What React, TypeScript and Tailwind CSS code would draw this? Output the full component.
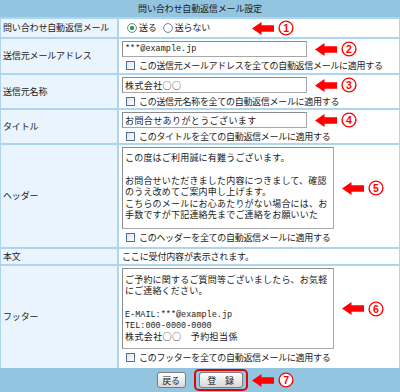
import React from "react";

const jp = "font-['Noto_Sans_CJK_JP',sans-serif]";
const lab = "text-[9px] tracking-[-0.15px] whitespace-nowrap";
const mono = "font-['Liberation_Mono',monospace] text-[8.5px]";

function Arrow() {
  return (
    <svg width="22" height="13" viewBox="0 0 22 13" className="shrink-0">
      <path d="M0 6.5 L9.5 0 L9.5 3.3 L22 3.3 L22 9.7 L9.5 9.7 L9.5 13 Z" fill="#ff0000" />
    </svg>
  );
}

function Num({ n }: { n: string }) {
  return (
    <svg width="16" height="16" viewBox="0 0 16 16" className="shrink-0">
      <circle cx="8" cy="8" r="6.9" fill="#ffffff" stroke="#ff0000" strokeWidth="1.4" />
      <text
        x="8"
        y="11.6"
        textAnchor="middle"
        fontSize="10.5"
        fontWeight="bold"
        fill="#ff0000"
        fontFamily="Liberation Sans, Arial, sans-serif"
      >
        {n}
      </text>
    </svg>
  );
}

function Mark({ n }: { n: string }) {
  return (
    <div className="flex items-center gap-[4px] shrink-0">
      <Arrow />
      <Num n={n} />
    </div>
  );
}

function Checkbox() {
  return <span className="block w-[9px] h-[9px] border border-[#4d6f98] bg-linear-to-br from-[#dfe3e8] to-white shrink-0" />;
}

function CheckRow({ text }: { text: string }) {
  return (
    <div className="flex items-center h-[12px] pl-[4px] gap-[4px] text-[9px] tracking-[-0.3px] whitespace-nowrap">
      <Checkbox />
      <span className="leading-none">{text}</span>
    </div>
  );
}

function Radio({ on }: { on?: boolean }) {
  return (
    <svg width="10" height="10" viewBox="0 0 10 10" className="shrink-0">
      <circle cx="5" cy="5" r="4.4" fill="#ffffff" stroke="#5c7596" strokeWidth="0.9" />
      {on && <circle cx="5" cy="5" r="2.2" fill="#2f9e3c" />}
    </svg>
  );
}

function Label({ children }: { children: React.ReactNode }) {
  return (
    <div className={`w-[116px] shrink-0 bg-[#eaf4fd] flex items-center pl-[2px] ${lab}`}>
      {children}
    </div>
  );
}

function InputRow({ value, n, check }: { value: React.ReactNode; n: string; check: string }) {
  return (
    <div className="flex-1 bg-white flex flex-col pl-[3px] pt-[2px] gap-[2px]">
      <div className="flex items-center">
        <div className="w-[185px] h-[16px] border border-[#a8a8a8] border-t-[#8c8c8c] border-l-[#8c8c8c] bg-white flex items-center pl-[2px] text-[9px] tracking-[0.4px] leading-none whitespace-nowrap">
          {value}
        </div>
        <div className="ml-[8px]">
          <Mark n={n} />
        </div>
      </div>
      <CheckRow text={check} />
    </div>
  );
}

function AreaRow({
  lines,
  n,
  check,
  h,
}: {
  lines: React.ReactNode;
  n: string;
  check: string;
  h: string;
}) {
  return (
    <div className="flex-1 bg-white flex flex-col pl-[3px] pt-[2px] gap-[2px]">
      <div className="flex items-center">
        <div
          className={`w-[212px] ${h} border border-[#a8a8a8] border-t-[#8c8c8c] border-l-[#8c8c8c] bg-white overflow-hidden pl-[2px] text-[9px] tracking-[0.2px] leading-[11.4px] whitespace-nowrap`}
        >
          {lines}
        </div>
        <div className="ml-[8px]">
          <Mark n={n} />
        </div>
      </div>
      <CheckRow text={check} />
    </div>
  );
}

export default function App() {
  return (
    <div className={`w-[400px] h-[392px] flex flex-col text-[#1a1a1a] ${jp} overflow-hidden`}>
      <div className={`h-[17px] bg-[#93c5e1] flex items-center justify-center ${lab} leading-none`}>
        問い合わせ自動返信メール設定
      </div>
      <div className="flex flex-col gap-[2px] pt-[2px] px-[1px] bg-[#add6ee]">
        {/* row 1 */}
        <div className="flex gap-[2px] h-[18px]">
          <Label>問い合わせ自動返信メール</Label>
          <div className={`flex-1 bg-white flex items-center pl-[8px] ${lab}`}>
            <Radio on />
            <span className="ml-[2px]">送る</span>
            <span className="ml-[6px]" />
            <Radio />
            <span className="ml-[2px]">送らない</span>
            <div className="ml-[42px]">
              <Mark n="1" />
            </div>
          </div>
        </div>
        {/* row 2 */}
        <div className="flex gap-[2px] h-[34px]">
          <Label>送信元メールアドレス</Label>
          <InputRow
            value={<span className={`${mono} tracking-normal`}>***@example.jp</span>}
            n="2"
            check="この送信元メールアドレスを全ての自動返信メールに適用する"
          />
        </div>
        {/* row 3 */}
        <div className="flex gap-[2px] h-[33px]">
          <Label>送信元名称</Label>
          <InputRow value="株式会社○○" n="3" check="この送信元名称を全ての自動返信メールに適用する" />
        </div>
        {/* row 4 */}
        <div className="flex gap-[2px] h-[33px]">
          <Label>タイトル</Label>
          <InputRow value="お問合せありがとうございます" n="4" check="このタイトルを全ての自動返信メールに適用する" />
        </div>
        {/* row 5 */}
        <div className="flex gap-[2px] h-[102px]">
          <Label>ヘッダー</Label>
          <AreaRow
            h="h-[82px]"
            n="5"
            check="このヘッダーを全ての自動返信メールに適用する"
            lines={
              <div className="pt-[4px]">
                <div>この度はご利用誠に有難うございます。</div>
                <div>&nbsp;</div>
                <div>お問合せいただきました内容につきまして、確認</div>
                <div>のうえ改めてご案内申し上げます。</div>
                <div>こちらのメールにお心あたりがない場合には、お</div>
                <div>手数ですが下記連絡先までご連絡をお願いいた</div>
              </div>
            }
          />
        </div>
        {/* row 6 */}
        <div className="flex gap-[2px] h-[15px]">
          <Label>本文</Label>
          <div className={`flex-1 bg-white flex items-center pl-[3px] ${lab}`}>
            ここに受付内容が表示されます。
          </div>
        </div>
        {/* row 7 */}
        <div className="flex gap-[2px] h-[102px]">
          <Label>フッター</Label>
          <AreaRow
            h="h-[81px]"
            n="6"
            check="このフッターを全ての自動返信メールに適用する"
            lines={
              <div className="pt-[5px] leading-[11px]">
                <div>ご予約に関するご質問等ございましたら、お気軽</div>
                <div>にご連絡ください。</div>
                <div className="h-[14px]" />
                <div className={`${mono} tracking-normal leading-[10.6px]`}>E-MAIL:***@example.jp</div>
                <div className={`${mono} tracking-normal leading-[10.6px]`}>TEL:000-0000-0000</div>
                <div className="tracking-[0.4px]">株式会社○○　予約担当係</div>
              </div>
            }
          />
        </div>
      </div>
      <div className={`h-[24px] bg-[#93c5e1] flex items-center justify-center pl-[4px] gap-[8px] ${lab}`}>
        <div className="w-[29px] h-[16px] border border-[#7d7d7d] rounded-[3px] bg-linear-to-b from-white to-[#d8d8d8] flex items-center justify-center leading-none">
          戻る
        </div>
        <div className="relative border-2 border-[#e60000] rounded-[5px] px-[3px] py-[1px]">
          <div className="w-[44px] h-[16px] border border-[#7d7d7d] rounded-[3px] bg-linear-to-b from-white to-[#d8d8d8] flex items-center justify-center leading-none">
            登　録
          </div>
          <div className="absolute left-full top-1/2 -translate-y-1/2 ml-[6px]">
            <Mark n="7" />
          </div>
        </div>
      </div>
    </div>
  );
}
